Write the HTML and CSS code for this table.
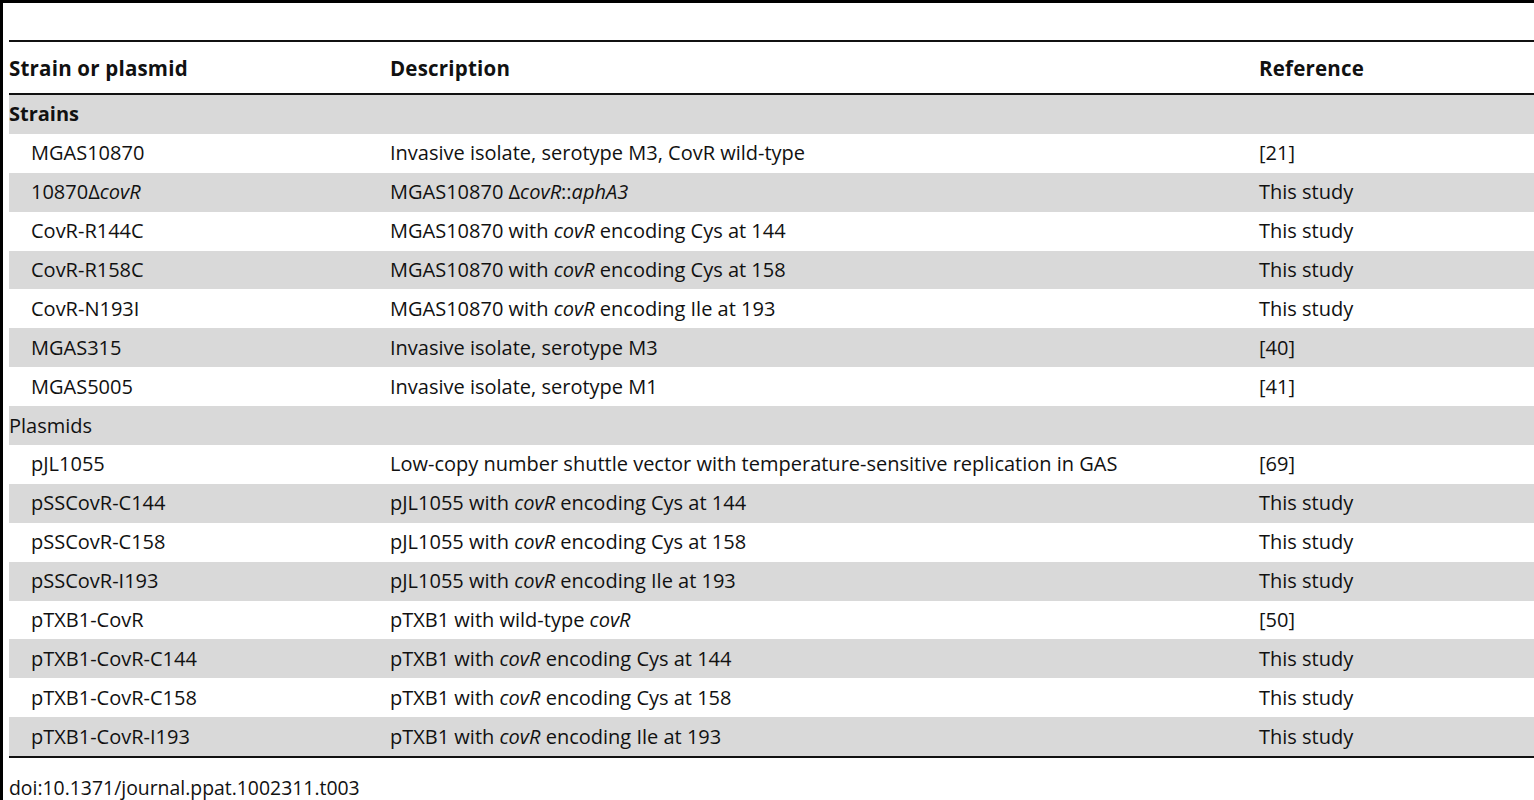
FILE: index.html
```html
<!DOCTYPE html>
<html>
<head>
<meta charset="utf-8">
<link rel="stylesheet" href="styles.css">
</head>
<body>
<div class="frame">
  <div class="spacer"></div>
  <table class="tbl">
    <colgroup><col class="c1"><col class="c2"><col class="c3"></colgroup>
    <thead>
      <tr><th>Strain or plasmid</th><th>Description</th><th>Reference</th></tr>
    </thead>
    <tbody>
      <tr class="g"><td class="sec b">Strains</td><td></td><td></td></tr>
      <tr><td class="it">MGAS10870</td><td>Invasive isolate, serotype M3, CovR wild-type</td><td>[21]</td></tr>
      <tr class="g"><td class="it">10870Δ<i>covR</i></td><td>MGAS10870 Δ<i>covR</i>::<i>aphA3</i></td><td>This study</td></tr>
      <tr><td class="it">CovR-R144C</td><td>MGAS10870 with <i>covR</i> encoding Cys at 144</td><td>This study</td></tr>
      <tr class="g"><td class="it">CovR-R158C</td><td>MGAS10870 with <i>covR</i> encoding Cys at 158</td><td>This study</td></tr>
      <tr><td class="it">CovR-N193I</td><td>MGAS10870 with <i>covR</i> encoding Ile at 193</td><td>This study</td></tr>
      <tr class="g"><td class="it">MGAS315</td><td>Invasive isolate, serotype M3</td><td>[40]</td></tr>
      <tr><td class="it">MGAS5005</td><td>Invasive isolate, serotype M1</td><td>[41]</td></tr>
      <tr class="g"><td class="sec">Plasmids</td><td></td><td></td></tr>
      <tr><td class="it">pJL1055</td><td>Low-copy number shuttle vector with temperature-sensitive replication in GAS</td><td>[69]</td></tr>
      <tr class="g"><td class="it">pSSCovR-C144</td><td>pJL1055 with <i>covR</i> encoding Cys at 144</td><td>This study</td></tr>
      <tr><td class="it">pSSCovR-C158</td><td>pJL1055 with <i>covR</i> encoding Cys at 158</td><td>This study</td></tr>
      <tr class="g"><td class="it">pSSCovR-I193</td><td>pJL1055 with <i>covR</i> encoding Ile at 193</td><td>This study</td></tr>
      <tr><td class="it">pTXB1-CovR</td><td>pTXB1 with wild-type <i>covR</i></td><td>[50]</td></tr>
      <tr class="g"><td class="it">pTXB1-CovR-C144</td><td>pTXB1 with <i>covR</i> encoding Cys at 144</td><td>This study</td></tr>
      <tr><td class="it">pTXB1-CovR-C158</td><td>pTXB1 with <i>covR</i> encoding Cys at 158</td><td>This study</td></tr>
      <tr class="g"><td class="it">pTXB1-CovR-I193</td><td>pTXB1 with <i>covR</i> encoding Ile at 193</td><td>This study</td></tr>
    </tbody>
  </table>
  <div class="doi">doi:10.1371/journal.ppat.1002311.t003</div>
</div>
</body>
</html>
```

FILE: styles.css
```css
html, body {
  margin: 0;
  padding: 0;
  background: #fff;
}
body {
  font-family: "Open Sans", "Liberation Sans", sans-serif;
  color: #111;
  font-size: 20px;
}
.frame {
  border-left: 3px solid #000;
  border-top: 3px solid #000;
  min-height: 797px;
  padding-left: 6px;
  box-sizing: border-box;
}
.spacer {
  height: 37px;
}
.tbl {
  width: 100%;
  border-collapse: collapse;
  border-top: 2px solid #111;
  border-bottom: 2px solid #111;
  table-layout: fixed;
}
.c1 { width: 381px; }
.c2 { width: 869px; }
.c3 { width: auto; }
th {
  text-align: left;
  font-weight: 700;
  font-size: 20.5px;
  letter-spacing: 0.2px;
  height: 51px;
  padding: 0;
  border-bottom: 2px solid #111;
  vertical-align: middle;
}
td {
  padding: 0;
  height: 38.9px;
  line-height: 26px;
  vertical-align: middle;
  white-space: nowrap;
}
tr.g td {
  background: #d9d9d9;
}
td.it {
  padding-left: 22px;
}
td.b {
  font-weight: 700;
}
.doi {
  margin-top: 18px;
  font-size: 19.4px;
  line-height: 24px;
}
```
